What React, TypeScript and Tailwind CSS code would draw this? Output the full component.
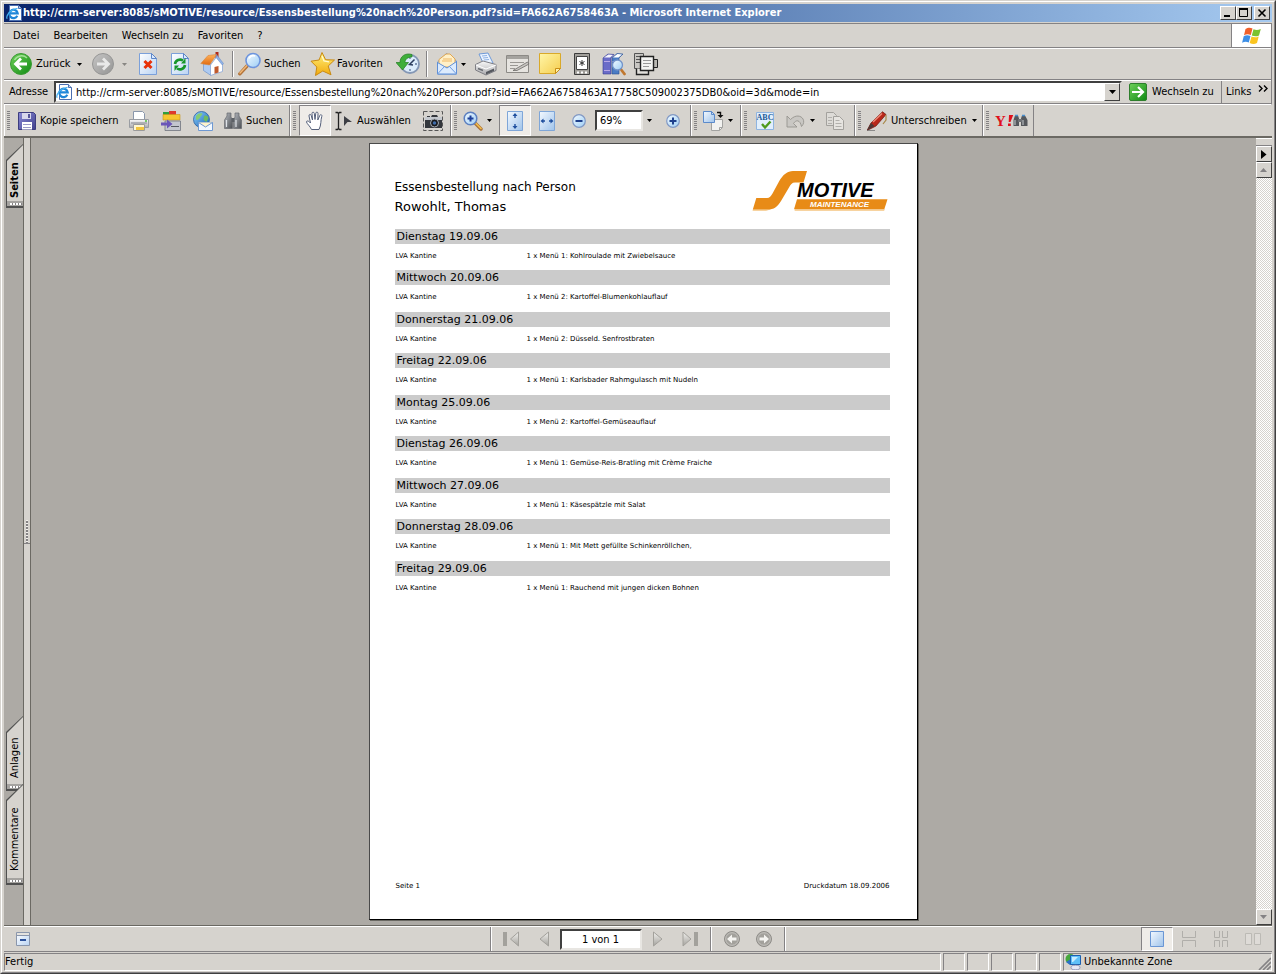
import React from 'react';

type Kids = { children?: React.ReactNode };

const DAYS = [
  { day: 'Dienstag 19.09.06', place: 'LVA Kantine', meal: '1 x Menü 1: Kohlroulade mit Zwiebelsauce' },
  { day: 'Mittwoch 20.09.06', place: 'LVA Kantine', meal: '1 x Menü 2: Kartoffel-Blumenkohlauflauf' },
  { day: 'Donnerstag 21.09.06', place: 'LVA Kantine', meal: '1 x Menü 2: Düsseld. Senfrostbraten' },
  { day: 'Freitag 22.09.06', place: 'LVA Kantine', meal: '1 x Menü 1: Karlsbader Rahmgulasch mit Nudeln' },
  { day: 'Montag 25.09.06', place: 'LVA Kantine', meal: '1 x Menü 2: Kartoffel-Gemüseauflauf' },
  { day: 'Dienstag 26.09.06', place: 'LVA Kantine', meal: '1 x Menü 1: Gemüse-Reis-Bratling mit Crème Fraiche' },
  { day: 'Mittwoch 27.09.06', place: 'LVA Kantine', meal: '1 x Menü 1: Käsespätzle mit Salat' },
  { day: 'Donnerstag 28.09.06', place: 'LVA Kantine', meal: '1 x Menü 1: Mit Mett gefüllte Schinkenröllchen,' },
  { day: 'Freitag 29.09.06', place: 'LVA Kantine', meal: '1 x Menü 1: Rauchend mit jungen dicken Bohnen' },
];

/* ---------- shared drawing helpers ---------- */

function Icon({ w = 24, h = 24, children }: Kids & { w?: number; h?: number }) {
  return (
    <svg width={w} height={h} viewBox={`0 0 ${w} ${h}`} className="block shrink-0" aria-hidden="true">
      {children}
    </svg>
  );
}

function Gradients() {
  const v = (id: string, a: string, b: string, diagonal = false) => (
    <linearGradient key={id} id={id} x1="0" y1="0" x2={diagonal ? '1' : '0'} y2="1">
      <stop offset="0" stopColor={a} />
      <stop offset="1" stopColor={b} />
    </linearGradient>
  );
  return (
    <svg width="0" height="0" className="absolute" aria-hidden="true">
      <defs>
        {v('green', '#6fd05a', '#0f8a12', true)}
        {v('grayball', '#c4c4c4', '#8e8e8e', true)}
        {v('paper', '#ffffff', '#b9d3f3', true)}
        {v('bluepage', '#f4f9ff', '#9fc3ea', true)}
        {v('lens', '#f4fbff', '#9ccdf5', true)}
        {v('gold', '#fff27a', '#f2a90c')}
        {v('note', '#fff6a8', '#f5cd4e', true)}
        {v('silver', '#fafafa', '#a9a9ad')}
        {v('purple', '#8a8ad6', '#40408c', true)}
        {v('disabled', '#f2f1ee', '#a3a19c')}
        {v('globe', '#8fd0ff', '#1460b0', true)}
        {v('bino', '#b8bcc2', '#4a4d52', true)}
        {v('roof', '#ffb35c', '#e06a10')}
      </defs>
    </svg>
  );
}

const Caret = () => (
  <Icon w={5} h={3}><path d="M0 0h5L2.5 3z" fill="#000" /></Icon>
);

function IeIcon() {
  return (
    <Icon w={16} h={16}>
      <path d="M3.5.5h9l3 3v12h-12z" fill="#fff" stroke="#4b6fb0" />
      <path d="M12.500.5v3h3" fill="#b9d3f3" stroke="#4b6fb0" />
      <path d="M11.300 10.800A4.200 4.200 0 1 1 11.700 8.300H4" fill="none" stroke="#1f86d8" strokeWidth="2.200" />
      <path d="M1.200 13.800C-.5 11 4 4.500 11.500 3.300" fill="none" stroke="#46b1f0" strokeWidth="1.200" />
    </Icon>
  );
}

const BackIcon = () => (
  <Icon w={22} h={24}>
    <circle cx="11" cy="12" r="10.500" fill="url(#green)" stroke="#3a9a33" />
    <path d="M4.500 8A8 8 0 0 1 17 6" fill="none" stroke="#c9f2bd" strokeWidth="1.500" opacity=".7" />
    <path d="M17 12H6.500M11 6.500 5.500 12l5.500 5.500" fill="none" stroke="#fff" strokeWidth="2.800" />
  </Icon>
);

const ForwardIcon = () => (
  <Icon w={22} h={24}>
    <circle cx="11" cy="12" r="10.500" fill="url(#grayball)" stroke="#8f8f8f" />
    <path d="M5 12h10.500M11 6.500l5.500 5.500-5.500 5.500" fill="none" stroke="#ececec" strokeWidth="2.800" />
  </Icon>
);

const Sheet = () => (
  <>
    <path d="M1.500 1.500h12l5 5v16h-17z" fill="url(#paper)" stroke="#7ba0da" />
    <path d="M13.500 1.500v5h5z" fill="#dbe9fb" stroke="#5d86c8" />
  </>
);

const StopIcon = () => (
  <Icon w={20} h={24}>
    <Sheet />
    <path d="M6.500 9l7 7M13.500 9l-7 7" stroke="#e8320a" strokeWidth="3" />
  </Icon>
);

const RefreshIcon = () => (
  <Icon w={20} h={24}>
    <Sheet />
    <path d="M5 12c.5-4 5-5.500 8-3.500" fill="none" stroke="#17962a" strokeWidth="2.600" />
    <path d="M11 11.500h4.500V6z" fill="#17962a" />
    <path d="M15 13c-.5 4-5 5.500-8 3.500" fill="none" stroke="#17962a" strokeWidth="2.600" />
    <path d="M9 13.500H4.500V19z" fill="#17962a" />
  </Icon>
);

const HomeIcon = () => (
  <Icon w={24} h={24}>
    <path d="M15.500 0h3v6h-3z" fill="#b02a18" />
    <path d="M3.500 12v6.500l7.500 5V11z" fill="#aecbf2" stroke="#6f92cc" strokeWidth=".7" />
    <path d="M10.500 13 16.500 5l6 7v7.500L10.500 23.500z" fill="#fff" stroke="#8ba7d6" strokeWidth=".8" />
    <path d="M14.500 15l4-1v6.500l-4 1.200z" fill="#c05a2c" />
    <path d="M.8 11.500 8 3.500 16.500 2.500 9.500 13z" fill="url(#roof)" stroke="#d98337" strokeWidth=".6" />
    <path d="M16.500 2.500l7 9-1.200 1.500-6.300-7.500z" fill="#8fb2e8" stroke="#6788c0" strokeWidth=".5" />
  </Icon>
);

const SearchIcon = () => (
  <Icon w={24} h={24}>
    <path d="M9 14 1.800 21.800" stroke="#b2733a" strokeWidth="3.400" strokeLinecap="round" />
    <path d="M9 13.500 2 21" stroke="#f0b878" strokeWidth="1.400" strokeLinecap="round" />
    <circle cx="15" cy="8.500" r="7" fill="url(#lens)" stroke="#6d94dd" strokeWidth="1.600" />
    <path d="M11 6.500a5 5 0 0 1 6-2.500" fill="none" stroke="#fff" strokeWidth="1.600" />
  </Icon>
);

const StarIcon = () => (
  <Icon w={26} h={26}>
    <path d="M12 1.500l3.600 7.200 8.900.3-6.300 6 2.800 8.800-8.200-3.800-7.300 4.500 1.300-8.500-5.800-5.800 8.100-1.200z" fill="url(#gold)" stroke="#c98a12" strokeLinejoin="round" />
    <path d="M12 5l2 5 5 .8" fill="none" stroke="#fffbd0" strokeWidth="1.300" />
  </Icon>
);

const HistoryIcon = () => (
  <Icon w={24} h={24}>
    <circle cx="14" cy="12" r="9" fill="#dcecfb" stroke="#8497b5" strokeWidth="1.800" />
    <path d="M14 5v2M14 17v2M21 12h-2" stroke="#60759a" strokeWidth="1.300" />
    <path d="M18.500 7.500 13.500 12.500 17 13" fill="none" stroke="#2d3e5e" strokeWidth="1.500" />
    <path d="M16 2.500C9 .5 4 4.500 4 10.500H0L6.500 18l6-7.500H9C9 7.500 11.500 5 16 5z" fill="#3fae3a" stroke="#237d22" strokeWidth=".7" />
  </Icon>
);

const MailIcon = () => (
  <Icon w={22} h={24}>
    <path d="M1.500 10 10.500 1.500 20.500 9v13h-19z" fill="#bcd7f8" stroke="#5f8fd6" />
    <path d="M3 7.500 10 2h4l5 5v8H3z" fill="#fff0c8" stroke="#e2a750" />
    <path d="M7 7h9M6 9h10" stroke="#efb765" />
    <path d="M1.500 10.500 11 16l9.500-6.500V22h-19z" fill="#dcebfd" stroke="#5f8fd6" />
    <path d="M1.500 22 8.500 14.500M20.500 22l-7-7.500" stroke="#6e9ce0" />
  </Icon>
);

const PrinterIcon = () => (
  <Icon w={24} h={24}>
    <path d="M5 2l9-1 5 10-9 2z" fill="#eaf3ff" stroke="#6f9ad8" />
    <path d="M8 4l5-.5M9 6l5-.5M10 8l5-.5" stroke="#8fb2e4" />
    <path d="M1.500 12.500 9 9l13 3.500v6L12 23 1.500 18z" fill="url(#silver)" stroke="#7e7e84" />
    <path d="M2 13l10 4 10-4" fill="none" stroke="#fff" />
    <path d="M12 20l8-3.500v2.500l-8 3.500z" fill="#55585e" />
    <path d="M4 16.500l5 2" stroke="#6b6e74" strokeWidth="1.500" />
  </Icon>
);

const EditIcon = () => (
  <Icon w={24} h={24}>
    <path d="M.5 3.500h22v17H.5z" fill="#e6e4e0" stroke="#8c8a86" />
    <path d="M1 4h21v3H1z" fill="#a5a39f" />
    <path d="M4 10.500h14M4 13.500h8M4 16.500h5" stroke="#9a9894" />
    <path d="M7 18.500 21.500 10l1.500 2L11 18.500z" fill="#c8c6c2" stroke="#6d6b68" strokeWidth=".8" />
  </Icon>
);

const NoteIcon = () => (
  <Icon w={24} h={24}>
    <path d="M1.500 1.500h21v15l-5 5h-16z" fill="url(#note)" stroke="#d9a92a" />
    <path d="M17.500 21.500v-5h5z" fill="#fff3a8" stroke="#c98f16" />
  </Icon>
);

const DeviceIcon = () => (
  <Icon w={16} h={24}>
    <path d="M.5 1.500h15v21H.5z" fill="#a19f9a" stroke="#3c3c3c" />
    <path d="M2.500 4.500h11v13h-11z" fill="#fff" stroke="#444" />
    <path d="M8 8v6M5.500 9.500l5 3M10.500 9.500l-5 3" stroke="#333" />
    <path d="M3 20.500h2M7 20.500h2M11 20.500h2" stroke="#fff" strokeWidth="2" />
  </Icon>
);

const BooksIcon = () => (
  <Icon w={24} h={24}>
    <path d="M1 6 6 2l6 .5L9 6v16H1z" fill="#6a6cc8" stroke="#343c92" strokeWidth=".6" />
    <path d="M2 5.500 6.500 2.500l4.500.5L8 5.500z" fill="#f4f4fc" />
    <path d="M10 6l5-4.500 6 .5-4 4v16h-7z" fill="#4a7cc4" stroke="#284e90" strokeWidth=".6" />
    <path d="M11 5.500l4.500-3.500 4.500.5-3.500 3z" fill="#fff" />
    <path d="M2 9.500h6M2 18.500h6M10.500 9.500h6" stroke="#b8a8e8" />
    <path d="M19 17.500l3.500 4.500" stroke="#c07830" strokeWidth="2.800" strokeLinecap="round" />
    <circle cx="15.500" cy="13" r="5" fill="url(#lens)" stroke="#7393c9" strokeWidth="1.300" />
  </Icon>
);

const ClipsIcon = () => (
  <Icon w={26} h={24}>
    <path d="M1.500 1.500h9v15h-9z" fill="#c9c7c3" stroke="#555" />
    <path d="M3 4.500h4M3 7.500h4M3 10.500h4" stroke="#555" />
    <path d="M17.500 7.500h7v8h-7z" fill="#bab8b3" stroke="#222" />
    <path d="M3.500 16.500v6h12v-5" fill="#e2e0dc" stroke="#222" strokeWidth="1.400" />
    <path d="M7.500 4.500h13v14h-13z" fill="#f4f4f2" stroke="#222" strokeWidth="1.400" />
    <path d="M10 8.500h8M10 11.500h8M10 14.500h6" stroke="#999" />
  </Icon>
);

const WindowsFlag = () => (
  <Icon w={20} h={18}>
    <path d="M3.500 2C6 .2 8.500.5 10.500 1.500L8.800 8C6.500 7 4.300 7 2 8.300z" fill="#f0602a" />
    <path d="M11.500 2.200c2.500 1.200 4.500 1 7.300-.2L17 8.500c-2.500 1.200-4.800 1-7.200 0z" fill="#7cc22e" />
    <path d="M1.700 9.300c2.300-1.300 4.500-1.200 6.800-.3L6.800 15.500c-2.300-1-4.300-1-6.700.3z" fill="#3c8ee6" />
    <path d="M9.500 9.500c2.300 1 4.500 1.200 7.200 0L15 16c-2.500 1.300-4.800 1.200-7.300 0z" fill="#fbc520" />
  </Icon>
);

const GoIcon = () => (
  <Icon w={18} h={18}>
    <rect x=".5" y=".5" width="17" height="17" rx="1.500" fill="url(#green)" stroke="#2e7e2c" />
    <path d="M3 9h10.500M9 4l5 5-5 5" fill="none" stroke="#fff" strokeWidth="2.200" />
  </Icon>
);

const SaveIcon = () => (
  <Icon w={18} h={18}>
    <path d="M.5.500h15l2 2v15H.5z" fill="url(#purple)" stroke="#3d3d80" />
    <path d="M4 1h9v6H4z" fill="#d8d8ec" />
    <path d="M10 2h2v4h-2z" fill="#55559a" />
    <path d="M4 10h10v7.500H4z" fill="#fff" />
    <path d="M5 12.500h8M5 15.500h8" stroke="#9a9ac8" />
  </Icon>
);

const PdfPrintIcon = () => (
  <Icon w={20} h={20}>
    <path d="M4.500.5h9l2 2v8h-11z" fill="#fff" stroke="#8a97ab" />
    <path d="M.5 8.500h19v8H.5z" fill="url(#silver)" stroke="#9a9da3" />
    <path d="M2 12h16" stroke="#85888e" />
    <path d="M4.500 13.500h11v6h-11z" fill="#fff7d0" stroke="#9a9a9a" />
    <path d="M7 16h8v3H7z" fill="#f4c63d" />
    <path d="M16 10h2" stroke="#4fbf3c" strokeWidth="1.500" />
  </Icon>
);

const OrganizeIcon = () => (
  <Icon w={20} h={20}>
    <path d="M2 1h7v4H2z" fill="#2f9e3c" />
    <path d="M8 0h7v4H8z" fill="#de3a2c" />
    <path d="M2 3.500h17V9H2z" fill="#f6c62f" stroke="#c8941a" strokeWidth=".6" />
    <path d="M4 10h15.500v9.500H4z" fill="#c3c6ce" stroke="#70747e" strokeWidth=".8" />
    <path d="M0 11.500h6V8.500l5.500 4.500L6 17.500v-3H0z" fill="#6a55b8" />
    <path d="M10 15.500h8" stroke="#555962" />
  </Icon>
);

const GlobeMailIcon = () => (
  <Icon w={20} h={20}>
    <circle cx="8.500" cy="8.500" r="8" fill="url(#globe)" stroke="#2b5f9e" strokeWidth=".8" />
    <path d="M3 5c2-3 5-3 6-2.500 1 1-1 2-2 4s-3 3-4 2z" fill="#86cc74" />
    <path d="M11 5c2-1 4 0 4.500 2l-2 4-3-2z" fill="#6fba62" />
    <path d="M5.500 11.500h14v8h-14z" fill="#f2f8ff" stroke="#6e98d2" />
    <path d="M5.500 11.500l7 4.500 7-4.500" fill="#fff4cc" stroke="#6e98d2" />
  </Icon>
);

const BinocularsIcon = () => (
  <Icon w={18} h={20}>
    <path d="M3 2h4v4l1.500 3v8.500H.5V9L3 5z" fill="url(#bino)" stroke="#66696e" strokeWidth=".7" />
    <path d="M11 2h4v3l2.500 4v8.500H9.500V9L11 6z" fill="url(#bino)" stroke="#66696e" strokeWidth=".7" />
    <path d="M7.500 7h3v4h-3z" fill="#5c6066" />
    <path d="M2.500 9v7M12 9v7" stroke="#dfe3e8" strokeWidth="1.200" />
  </Icon>
);

const HandIcon = () => (
  <Icon w={20} h={20}>
    <path d="M6.500 18.500C5 15 2 13 1.500 11c0-1.500 2-1.500 4 1L4 5c-.3-1.800 1.700-2.200 2.200-.5L7.500 9 7 2.500C7 .7 9 .7 9.300 2.500L10 8.500l.8-6.300c.3-1.700 2.200-1.400 2.200.2L12.800 9l2-4.500c.7-1.500 2.500-.8 2 .8C15.500 9 16.500 14 14 18.500z" fill="#fff" stroke="#55607a" strokeLinejoin="round" />
  </Icon>
);

const SelectIcon = () => (
  <Icon w={18} h={20}>
    <path d="M.5 1.500h2l1 1 1-1h2M.5 18.500h2l1-1 1 1h2M3.500 2v16" fill="none" stroke="#222" strokeWidth="1.300" />
    <path d="M9 5l8 6h-4.500L9 15z" fill="#3c3e44" />
  </Icon>
);

const CameraIcon = () => (
  <Icon w={20} h={20}>
    <path d="M.5.500h19v19H.5z" fill="none" stroke="#555" strokeDasharray="4 2" />
    <path d="M2 6h2V5h3v1h1l1-2h5l1 2h4v11H2z" fill="#34373c" />
    <path d="M2 6h17v3H2z" fill="#c4c8ce" />
    <circle cx="11.500" cy="12" r="4" fill="#16181c" stroke="#a4aab2" />
    <circle cx="11.500" cy="12" r="1.800" fill="#3f6ca8" />
  </Icon>
);

const ZoomInIcon = () => (
  <Icon w={20} h={20}>
    <path d="M12.500 12.500 18 18" stroke="#a9713a" strokeWidth="3.400" strokeLinecap="round" />
    <path d="M13 12.500 18 17.500" stroke="#f3c04c" strokeWidth="1.600" strokeLinecap="round" />
    <circle cx="7.500" cy="7.500" r="6.300" fill="url(#lens)" stroke="#5c7fc0" strokeWidth="1.500" />
    <path d="M4.500 7.500h6M7.500 4.500v6" stroke="#1d3f9a" strokeWidth="2" />
  </Icon>
);

const FitPageIcon = () => (
  <Icon w={16} h={20}>
    <path d="M.5.500h15v19H.5z" fill="url(#bluepage)" stroke="#7fa6d8" />
    <path d="M8 3v4M8 13v4" stroke="#1f4f9e" strokeWidth="1.400" />
    <path d="M5.500 5 8 2l2.500 3zM5.500 15 8 18l2.500-3z" fill="#1f4f9e" />
  </Icon>
);

const FitWidthIcon = () => (
  <Icon w={16} h={20}>
    <path d="M.5.500h15v19H.5z" fill="url(#bluepage)" stroke="#7fa6d8" />
    <path d="M3 10h3M10 10h3" stroke="#1f4f9e" strokeWidth="1.400" />
    <path d="M4.500 7.500 1.500 10l3 2.500zM11.500 7.500l3 2.500-3 2.500z" fill="#1f4f9e" />
  </Icon>
);

const RoundSign = ({ plus }: { plus?: boolean }) => (
  <Icon w={14} h={14}>
    <circle cx="7" cy="7" r="6.300" fill="url(#lens)" stroke="#8098c4" strokeWidth="1.200" />
    <path d={plus ? 'M3.500 7h7M7 3.500v7' : 'M3.500 7h7'} stroke="#1d3f8c" strokeWidth="2" />
  </Icon>
);

const RotateIcon = () => (
  <Icon w={21} h={20}>
    <path d="M8.500 8.500h11v8l-3 3h-8z" fill="#f2f2f0" stroke="#a2a2a0" />
    <path d="M16.500 19.500v-3h3" fill="none" stroke="#a2a2a0" />
    <path d="M.5.500h8l3 3v8H.5z" fill="url(#bluepage)" stroke="#5b8acb" />
    <path d="M8.500.500v3h3" fill="none" stroke="#5b8acb" />
    <path d="M14 1.500h3.500v3" fill="none" stroke="#111" strokeWidth="1.400" />
    <path d="M14.500 4h6L17.500 7z" fill="#111" />
  </Icon>
);

const SpellIcon = () => (
  <Icon w={18} h={18}>
    <path d="M.5.500h17v17H.5z" fill="#e2effc" stroke="#8fb4e0" />
    <text x="9" y="8" textAnchor="middle" fontFamily="Liberation Serif" fontWeight="700" fontSize="8" fill="#235a96">ABC</text>
    <path d="M6 12l3 3.500 5.500-6" fill="none" stroke="#4f9b1e" strokeWidth="2.400" />
  </Icon>
);

const UndoIcon = () => (
  <Icon w={20} h={16}>
    <path d="M1 3v11h10L7.500 10.500C10 6.500 14 6.500 15.500 13.500 22 7 13-2 4.500 6.500z" fill="#c9c7c3" stroke="#96948f" strokeWidth=".9" />
  </Icon>
);

const CopyIcon = () => (
  <Icon w={18} h={18}>
    <path d="M.5.500h7l3 3v10H.5z" fill="#dddbd7" stroke="#a3a19d" />
    <path d="M7.500 4.500h6l4 4v9h-10z" fill="#e6e4e0" stroke="#a3a19d" />
    <path d="M2 5.500h4M2 8.500h4M2 11.500h4M9.500 8.500h4M9.500 11.500h6M9.500 14.500h6" stroke="#b2b0ac" />
  </Icon>
);

const PenIcon = () => (
  <Icon w={20} h={20}>
    <path d="M0 19.500 4 12 15.500.8 19 3.500 9 15z" fill="#b8281a" stroke="#70140c" strokeWidth=".7" />
    <path d="M6 11 15 2.500" stroke="#f08a78" strokeWidth="1.400" />
    <path d="M0 19.500 4 12l3.500 3z" fill="#4a3a38" />
    <path d="M19 4v5l-3 4" fill="none" stroke="#a88848" strokeWidth="1.200" />
    <path d="M0 19.500h8" stroke="#777" strokeWidth=".8" />
  </Icon>
);

const YahooIcon = () => (
  <Icon w={36} h={20}>
    <text x="1" y="15" fontFamily="Liberation Serif" fontWeight="700" fontSize="15" fill="#e0101c">Y</text>
    <path d="M15 4h4.200l-2.700 7h-1.800zM14 12.500h2.800v2.500H14z" fill="#e0101c" />
    <path d="M21 4.500h3l1 3v7.500h-5.500V9zM28 4.500h3L33.500 9v6H27V7.500z" fill="#55585c" />
    <path d="M24 8h4v3h-4z" fill="#6e7276" />
    <path d="M21 9v5M29 9v5" stroke="#c8ccd0" />
    <path d="M21 4.500h3M28 4.500h3" stroke="#4a90d0" strokeWidth="1.500" />
  </Icon>
);

const ZoneIcon = () => (
  <Icon w={16} h={16}>
    <circle cx="5.500" cy="5" r="5" fill="#46a83c" />
    <path d="M1 8l5-3 2 5-3 1z" fill="#2b70c8" />
    <path d="M5.500 1.500h10v9h-10z" fill="#5fc0f8" stroke="#1c5fae" />
    <path d="M7 3h6l-5 5H7z" fill="#c8ecff" />
    <ellipse cx="10.500" cy="13.500" rx="4.500" ry="2.300" fill="#e6e8f4" stroke="#8288b0" strokeWidth=".8" />
  </Icon>
);

const SMotiveLogo = () => (
  <svg width="136" height="42" viewBox="0 0 136 42" className="block shrink-0" role="img" aria-label="S Motive Maintenance">
    <path d="M1 39.300h18l-5 1.700H.5zM43 39.300h90l-1 1.700H42.500z" fill="#f7d3a0" />
    <path d="M55 1 51.500 12.500H43c-3 0-4.500 2-6 5L29 31c-3.500 6-7 8.500-13.500 8.500H.8L4.300 28H15c2.500 0 4-2 5.500-4.500L27 11.500C31 4.500 35.500 1 41 1z" fill="#e88b17" />
    <path d="M45 29.200h90.500L132.300 39.300H42z" fill="#e88b17" />
    <text x="45" y="26.500" fontFamily="Liberation Sans" fontWeight="700" fontStyle="italic" fontSize="20" fill="#000">MOTIVE</text>
    <text x="58" y="37" fontFamily="Liberation Sans" fontWeight="700" fontStyle="italic" fontSize="8" fill="#fff">MAINTENANCE</text>
  </svg>
);

/* ---------- window chrome ---------- */

function CaptionButton({ label, children }: Kids & { label: string }) {
  return (
    <button aria-label={label} className="flex h-[14px] w-4 items-center justify-center border border-t-white border-l-white border-r-[#404040] border-b-[#404040] bg-[#d6d3ce]">
      {children}
    </button>
  );
}

function TitleBar() {
  return (
    <header className="flex h-[18px] items-center bg-linear-to-r from-[#0a246a] to-[#a6caf0] px-[2px]">
      <IeIcon />
      <h1 className="ml-px flex-1 truncate font-['DejaVu_Sans_Condensed','DejaVu_Sans',sans-serif] text-[11px] font-bold text-white">
        http://crm-server:8085/sMOTIVE/resource/Essensbestellung%20nach%20Person.pdf?sid=FA662A6758463A - Microsoft Internet Explorer
      </h1>
      <div className="flex">
        <CaptionButton label="Minimieren"><Icon w={10} h={10}><path d="M1 7h6v2H1z" /></Icon></CaptionButton>
        <CaptionButton label="Maximieren"><Icon w={10} h={10}><path d="M.5 1.500h8v7h-8z" fill="none" stroke="#000" /><path d="M0 0h9v2H0z" /></Icon></CaptionButton>
        <span className="w-[2px]" />
        <CaptionButton label="Schließen"><Icon w={10} h={10}><path d="M1.500 1.500l7 7M8.500 1.500l-7 7" stroke="#000" strokeWidth="1.600" /></Icon></CaptionButton>
      </div>
    </header>
  );
}

function MenuBar() {
  return (
    <div className="flex h-6 border-b border-[#848284]">
      <nav className="flex flex-1 items-center gap-[14px] pt-px pl-[9px]">
        {['Datei', 'Bearbeiten', 'Wechseln zu', 'Favoriten', '?'].map((m) => (
          <button key={m}>{m}</button>
        ))}
      </nav>
      <div className="flex w-10 items-center justify-center border-l border-[#848284] bg-white"><WindowsFlag /></div>
    </div>
  );
}

const ToolSep = () => <span className="mx-1 h-[26px] w-[2px] shrink-0 border-l border-r border-l-[#848284] border-r-white" />;

function Tool({ label, children, className = 'w-8 justify-center' }: Kids & { label?: string; className?: string }) {
  return (
    <button aria-label={label} className={`flex h-full shrink-0 items-center ${className}`}>
      {children}
    </button>
  );
}

function BrowserToolbar() {
  return (
    <div role="toolbar" aria-label="Standard" className="flex h-8 items-center border-t border-b border-t-white border-b-[#848284] pl-1">
      <Tool className="w-20 gap-1 pl-[2px]"><BackIcon />Zurück<span className="ml-auto pr-[6px]"><Caret /></span></Tool>
      <Tool label="Vorwärts" className="w-11 gap-2 pl-1 opacity-90"><ForwardIcon /><span className="opacity-40"><Caret /></span></Tool>
      <Tool label="Abbrechen"><StopIcon /></Tool>
      <Tool label="Aktualisieren"><RefreshIcon /></Tool>
      <Tool label="Startseite"><HomeIcon /></Tool>
      <ToolSep />
      <Tool className="w-[72px] gap-[2px]"><SearchIcon />Suchen</Tool>
      <Tool className="w-[84px] gap-px"><StarIcon />Favoriten</Tool>
      <Tool label="Verlauf" className="w-7 justify-center"><HistoryIcon /></Tool>
      <ToolSep />
      <Tool label="E-Mail" className="w-[38px] gap-[3px] pl-1"><MailIcon /><Caret /></Tool>
      <Tool label="Drucken"><PrinterIcon /></Tool>
      <Tool label="Bearbeiten"><EditIcon /></Tool>
      <Tool label="Notiz"><NoteIcon /></Tool>
      <Tool label="Gerät"><DeviceIcon /></Tool>
      <Tool label="Recherchieren"><BooksIcon /></Tool>
      <Tool label="Zwischenablage"><ClipsIcon /></Tool>
    </div>
  );
}

function AddressBar() {
  return (
    <form className="flex h-6 items-stretch border-t border-b border-t-white border-b-[#848284]" onSubmit={(e) => e.preventDefault()}>
      <label htmlFor="address" className="flex w-[50px] items-center pl-[5px]">Adresse</label>
      <div className="flex flex-1 items-center border-2 border-t-[#404040] border-l-[#404040] border-r-[#d6d3ce] border-b-[#d6d3ce] bg-white">
        <IeIcon />
        <input
          id="address"
          className="min-w-0 flex-1 bg-transparent px-1 pt-[2px] outline-none"
          defaultValue="http://crm-server:8085/sMOTIVE/resource/Essensbestellung%20nach%20Person.pdf?sid=FA662A6758463A17758C509002375DB0&oid=3d&mode=in"
        />
        <button type="button" aria-label="Adressliste" className="flex h-[18px] w-4 items-center justify-center border border-t-white border-l-white border-r-[#404040] border-b-[#404040] bg-[#d6d3ce]">
          <Icon w={7} h={4}><path d="M0 0h7L3.500 4z" /></Icon>
        </button>
      </div>
      <button className="ml-[7px] flex w-[92px] items-center gap-[5px]"><GoIcon />Wechseln zu</button>
      <div className="flex w-[50px] items-center border-l border-[#848284] pl-1">
        <a href="#links">Links</a>
        <button type="button" aria-label="Weitere Links" className="mb-2 ml-[7px]">
          <Icon w={10} h={7}><path d="M1 .5l3 3-3 3M6 .5l3 3-3 3" fill="none" stroke="#000" strokeWidth="1.400" /></Icon>
        </button>
      </div>
    </form>
  );
}

function Group({ children, className }: Kids & { className: string }) {
  return (
    <div className={`flex h-full shrink-0 items-center border-l border-r border-l-white border-r-[#848284] pl-[2px] ${className}`}>
      <span className="h-5 w-[3px] shrink-0 bg-[repeating-linear-gradient(#848284_0_1px,transparent_1px_2px)]" />
      {children}
    </div>
  );
}

const PRESSED = 'w-8 justify-center border border-t-[#848284] border-l-[#848284] border-r-white border-b-white bg-[#efece8]';

function PdfToolbar() {
  return (
    <div role="toolbar" aria-label="PDF" className="flex h-[31px] items-stretch">
      <Group className="w-[286px]">
        <Tool className="w-[113px] gap-1 pl-2"><SaveIcon />Kopie speichern</Tool>
        <Tool label="Drucken"><PdfPrintIcon /></Tool>
        <Tool label="Organizer"><OrganizeIcon /></Tool>
        <Tool label="E-Mail"><GlobeMailIcon /></Tool>
        <Tool className="w-[68px] gap-1 pl-[5px]"><BinocularsIcon />Suchen</Tool>
      </Group>
      <Group className="w-[161px]">
        <span className="w-[3px]" />
        <Tool label="Hand" className={PRESSED}><HandIcon /></Tool>
        <Tool className="w-[86px] gap-1 pl-1"><SelectIcon />Auswählen</Tool>
        <Tool label="Schnappschuss"><CameraIcon /></Tool>
      </Group>
      <Group className="w-60">
        <Tool label="Vergrößerung" className="w-[42px] gap-1 pl-[6px]"><ZoomInIcon /><Caret /></Tool>
        <Tool label="Ganze Seite" className={PRESSED}><FitPageIcon /></Tool>
        <Tool label="Fensterbreite"><FitWidthIcon /></Tool>
        <Tool label="Verkleinern"><RoundSign /></Tool>
        <input
          aria-label="Zoom"
          defaultValue="69%"
          className="h-[21px] w-12 border-2 border-t-[#404040] border-l-[#404040] border-r-[#e8e6e2] border-b-[#e8e6e2] bg-white px-[3px] outline-none"
        />
        <Tool label="Zoomstufen" className="w-3 justify-center"><Caret /></Tool>
        <Tool label="Vergrößern" className="w-9 justify-center"><RoundSign plus /></Tool>
      </Group>
      <Group className="w-[50px]">
        <Tool label="Drehen" className="w-10 gap-1 pl-[6px]"><RotateIcon /><Caret /></Tool>
      </Group>
      <Group className="w-[114px]">
        <Tool label="Rechtschreibung" className="w-9 justify-center"><SpellIcon /></Tool>
        <Tool label="Rückgängig" className="w-9 gap-1 pl-[3px]"><UndoIcon /><Caret /></Tool>
        <Tool label="Kopieren"><CopyIcon /></Tool>
      </Group>
      <Group className="w-32">
        <Tool className="w-[117px] gap-1 pl-[6px]"><PenIcon />Unterschreiben<span className="ml-auto pr-px"><Caret /></span></Tool>
      </Group>
      <Group className="w-[51px]">
        <Tool label="Yahoo-Suche" className="pl-[5px]"><YahooIcon /></Tool>
      </Group>
    </div>
  );
}

/* ---------- document area ---------- */

function SideTab({ label, className }: { label: string; className: string }) {
  return (
    <button className={`flex w-[17px] bg-[#505050] pb-[2px] pl-px [clip-path:polygon(0_16px,100%_0,100%_100%,0_100%)] ${className}`}>
      <span className="flex h-full w-4 flex-col bg-[#d6d3ce] [clip-path:polygon(0_17px,100%_1px,100%_100%,0_100%)]">
        <span className="flex flex-1 rotate-180 items-center justify-center pb-4 leading-4 [writing-mode:vertical-rl]">{label}</span>
        <span className="flex h-[5px] items-center bg-[#a5a3a0] pl-[3px]">
          <span className="h-[2px] w-3 bg-[repeating-linear-gradient(90deg,#ffffff_0_2px,#848284_2px_3px)]" />
        </span>
      </span>
    </button>
  );
}

function SidePanel() {
  return (
    <aside className="flex w-[20px] flex-col items-end border-r border-[#6b6963] bg-[#adaaa5] pt-[6px] pb-10">
      <SideTab label="Seiten" className="h-16 font-bold" />
      <span className="flex-1" />
      <SideTab label="Anlagen" className="h-[75px]" />
      <SideTab label="Kommentare" className="-mt-[7px] h-[101px]" />
    </aside>
  );
}

function DocumentPage() {
  return (
    <article className="flex min-h-[777px] w-[549px] shrink-0 flex-col border border-t-[#4a4a4a] border-l-[#4a4a4a] border-r-black border-b-black bg-white pr-[27px] pb-7 pl-[25px] font-['DejaVu_Sans',sans-serif] text-black shadow-[1px_1px_0_#6b6963]">
      <div className="flex justify-between pt-[26px] pr-[2px]">
        <div className="pt-2">
          <h2 className="text-[12px] leading-[18px]">Essensbestellung nach Person</h2>
          <p className="text-[13px] leading-[21px]">Rowohlt, Thomas</p>
        </div>
        <SMotiveLogo />
      </div>
      <div className="mt-[12px] grid h-[373px] auto-rows-fr">
        {DAYS.map((d) => (
          <section key={d.day}>
            <h3 className="h-[15px] bg-[#cbcbcb] pl-[2px] text-[11px] leading-[15px]">{d.day}</h3>
            <div className="flex pt-[6px] pl-px text-[7px] leading-[12px]">
              <span className="w-[131px]">{d.place}</span>
              <span>{d.meal}</span>
            </div>
          </section>
        ))}
      </div>
      <footer className="mt-auto flex justify-between pl-px text-[7px] leading-[10px]">
        <span>Seite 1</span>
        <span>Druckdatum 18.09.2006</span>
      </footer>
    </article>
  );
}

const SCROLL_BTN = 'flex h-4 items-center justify-center border border-t-white border-l-white border-r-[#404040] border-b-[#404040] bg-[#d6d3ce]';

function ScrollBar() {
  return (
    <div className="flex w-4 flex-col bg-[repeating-conic-gradient(#ffffff_0_25%,#d6d3ce_0_50%)] bg-size-[2px_2px]">
      <span className="h-2 border-t border-b border-t-white border-b-[#848284] bg-[#d6d3ce]" />
      <button aria-label="Ausklappen" className={SCROLL_BTN}><Icon w={6} h={9}><path d="M0 0v9l5.500-4.500z" /></Icon></button>
      <button aria-label="Nach oben" className={SCROLL_BTN}><Icon w={8} h={5}><path d="M0 4h7L3.500 0z" fill="#848284" /></Icon></button>
      <span className="flex-1" />
      <button aria-label="Nach unten" className={SCROLL_BTN}><Icon w={8} h={5}><path d="M0 0h7L3.500 4z" fill="#848284" /></Icon></button>
    </div>
  );
}

function Workspace() {
  return (
    <main className="flex flex-1 items-stretch border-t-2 border-b border-t-[#6b6963] border-b-[#6b6963]">
      <SidePanel />
      <div className="flex w-[6px] items-center bg-[#d6d3ce]">
        <span className="h-6 w-full border-b border-[#848284] bg-[repeating-linear-gradient(#848284_0_2px,#f2f0ec_2px_3px)] bg-size-[2px_3px] bg-center bg-repeat-y" />
      </div>
      <div className="flex flex-1 items-start justify-center border-l border-[#6b6963] bg-[#adaaa5] pt-[5px] pr-px pb-1">
        <DocumentPage />
      </div>
      <ScrollBar />
    </main>
  );
}

const NavIcon = ({ d, bar }: { d: string; bar?: string }) => (
  <Icon w={18} h={16}>
    <path d={d} fill="url(#disabled)" stroke="#a3a19c" />
    {bar && <path d={bar} fill="#a3a19c" />}
  </Icon>
);

const RoundNav = ({ d }: { d: string }) => (
  <Icon w={18} h={18}>
    <circle cx="9" cy="9" r="7.500" fill="#a3a19c" stroke="#8f8d89" />
    <circle cx="9" cy="9" r="6.300" fill="none" stroke="#c4c2be" />
    <path d={d} fill="#f4f3f0" />
  </Icon>
);

function PageBar() {
  return (
    <div className="grid h-[26px] grid-cols-[1fr_auto_1fr] items-stretch border-t border-b border-t-white border-b-[#848284] pr-px">
      <div className="flex items-center pl-3">
        <button aria-label="Leiste ausblenden">
          <Icon w={14} h={14}>
            <path d="M.5.500h13v13H.5z" fill="url(#paper)" stroke="#8a96ac" />
            <path d="M1 1h12v2H1z" fill="#e4e2de" />
            <path d="M1 3.500h12" stroke="#8a96ac" />
            <path d="M4 7h6v2H4z" fill="#2c529c" />
          </Icon>
        </button>
      </div>
      <div className="flex items-center">
        <span className="h-6 w-[2px] border-l border-r border-l-[#848284] border-r-white" />
        <Tool label="Erste Seite" className="w-[38px] justify-center"><NavIcon d="M16.500 1v14L8.500 8z" bar="M1 1h4v14H1z" /></Tool>
        <Tool label="Vorherige Seite" className="w-[30px] justify-center"><NavIcon d="M12.500 1v14L4 8z" /></Tool>
        <input aria-label="Seite" defaultValue="1 von 1" className="h-[21px] w-[82px] border-2 border-t-[#404040] border-l-[#404040] border-r-[#e8e6e2] border-b-[#e8e6e2] bg-white text-center outline-none" />
        <Tool label="Nächste Seite" className="w-[30px] justify-center"><NavIcon d="M5.500 1v14L14 8z" /></Tool>
        <Tool label="Letzte Seite" className="w-9 justify-center"><NavIcon d="M2 1v14l8-7z" bar="M13 1h4v14h-4z" /></Tool>
        <span className="w-[2px]" />
        <span className="h-6 w-[2px] border-l border-r border-l-[#848284] border-r-white" />
        <span className="w-1" />
        <Tool label="Vorherige Ansicht"><RoundNav d="M4 9l5-4.500v3h4.500v3H9v3z" /></Tool>
        <Tool label="Nächste Ansicht"><RoundNav d="M14 9 9 4.500v3H4.500v3H9v3z" /></Tool>
        <span className="w-1" />
        <span className="h-6 w-[2px] border-l border-r border-l-[#848284] border-r-white" />
      </div>
      <div className="flex items-center justify-end pr-[2px]">
        <Tool label="Einzelne Seite" className={PRESSED}><Icon w={14} h={16}><path d="M.5.500h13v15H.5z" fill="url(#bluepage)" stroke="#6a96d4" /></Icon></Tool>
        <Tool label="Fortlaufend"><Icon w={14} h={16}><path d="M.5 0v6.500h13V0M.5 16V9.500h13V16" fill="none" stroke="#b0aeaa" /></Icon></Tool>
        <Tool label="Fortlaufend Doppelseiten"><Icon w={14} h={16}><path d="M.5 0v6.500h5V0M8.500 0v6.500h5V0M.5 16V9.500h5V16M8.500 16V9.500h5V16" fill="none" stroke="#b0aeaa" /></Icon></Tool>
        <Tool label="Doppelseiten"><Icon w={16} h={12}><path d="M.5.500h6v11h-6zM9.500.500h6v11h-6z" fill="#dedbd7" stroke="#bcbab5" /></Icon></Tool>
      </div>
    </div>
  );
}

const PANE = 'flex items-center border border-t-[#848284] border-l-[#848284] border-r-white border-b-white';

function StatusBar() {
  return (
    <footer className="flex h-[19px] gap-[2px] pt-px">
      <div className={`${PANE} flex-1`}>Fertig</div>
      {[0, 1, 2, 3, 4].map((i) => (
        <div key={i} className={`${PANE} w-[22px]`} />
      ))}
      <div className={`${PANE} w-[209px] gap-[3px] pl-px`}>
        <ZoneIcon />Unbekannte Zone
        <span className="ml-auto self-end">
          <Icon w={13} h={13}><path d="M1 13 13 1M5 13l8-8M9 13l4-4" stroke="#848284" strokeWidth="1.600" /></Icon>
        </span>
      </div>
    </footer>
  );
}

export default function App() {
  return (
    <div className="flex min-h-screen flex-col border border-t-[#d6d3ce] border-l-[#d6d3ce] border-r-[#404040] border-b-[#404040] bg-[#d6d3ce] font-['DejaVu_Sans_Condensed','DejaVu_Sans',sans-serif] text-[11px] leading-[14px] whitespace-nowrap text-black">
      <Gradients />
      <div className="flex flex-1 flex-col border border-t-white border-l-white border-r-[#848284] border-b-[#848284] p-[2px] pb-px">
        <TitleBar />
        <div className="mt-px border border-l-0 border-t-[#848284] border-r-[#848284] border-b-white">
          <MenuBar />
          <BrowserToolbar />
          <AddressBar />
        </div>
        <PdfToolbar />
        <Workspace />
        <PageBar />
        <StatusBar />
      </div>
    </div>
  );
}
